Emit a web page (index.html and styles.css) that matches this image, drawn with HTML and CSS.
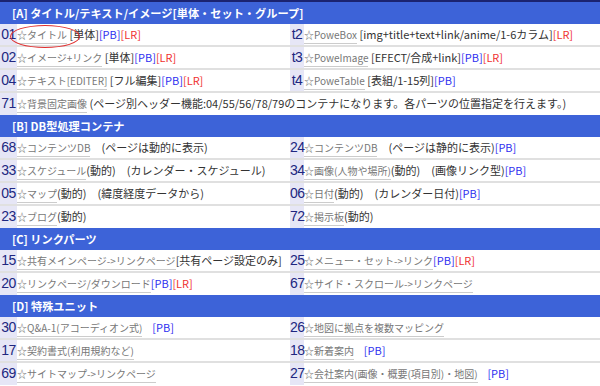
FILE: index.html
```html
<!DOCTYPE html>
<html lang="ja">
<head>
  <meta charset="UTF-8" />
  <title>パーツ一覧</title>
  <link rel="stylesheet" href="styles.css">
</head>
<body>
  <div class="menu">
    <section class="group">
      <h2 class="group-title">[A] タイトル/テキスト/イメージ[単体・セット・グループ]</h2>
      <div class="row">
        <span class="num">01</span><span class="item"><a href="#">☆タイトル</a> [単体]<span class="pb">[PB]</span><span class="lr">[LR]</span></span>
        <span class="num">t2</span><span class="item"> <a href="#">☆PoweBox</a> [img+title+text+link/anime/1-6カラム]<span class="lr">[LR]</span></span>
      </div>
      <div class="row">
        <span class="num">02</span><span class="item"><a href="#">☆イメージ+リンク</a> [単体]<span class="pb">[PB]</span><span class="lr">[LR]</span></span>
        <span class="num">t3</span><span class="item"> <a href="#">☆PoweImage</a> [EFECT/合成+link]<span class="pb">[PB]</span><span class="lr">[LR]</span></span>
      </div>
      <div class="row">
        <span class="num">04</span><span class="item"><a href="#">☆テキスト[EDITER]</a> [フル編集]<span class="pb">[PB]</span><span class="lr">[LR]</span></span>
        <span class="num">t4</span><span class="item"> <a href="#">☆PoweTable</a> [表組/1-15列]<span class="pb">[PB]</span></span>
      </div>
      <div class="row row-wide">
        <span class="num">71</span><span class="item"><a href="#">☆背景固定画像</a> (ページ別ヘッダー機能:04/55/56/78/79のコンテナになります。各パーツの位置指定を行えます。)</span>
      </div>
    </section>

    <section class="group">
      <h2 class="group-title">[B] DB型処理コンテナ</h2>
      <div class="row">
        <span class="num">68</span><span class="item"><a href="#">☆コンテンツDB</a>　(ページは動的に表示)</span>
        <span class="num">24</span><span class="item"><a href="#">☆コンテンツDB</a>　(ページは静的に表示)<span class="pb">[PB]</span></span>
      </div>
      <div class="row">
        <span class="num">33</span><span class="item"><a href="#">☆スケジュール</a>(動的)　(カレンダー・スケジュール)</span>
        <span class="num">34</span><span class="item"><a href="#">☆画像(人物や場所)</a>(動的)　(画像リンク型)<span class="pb">[PB]</span></span>
      </div>
      <div class="row">
        <span class="num">05</span><span class="item"><a href="#">☆マップ</a>(動的)　(緯度経度データから)</span>
        <span class="num">06</span><span class="item"><a href="#">☆日付</a>(動的)　(カレンダー日付)<span class="pb">[PB]</span></span>
      </div>
      <div class="row">
        <span class="num">23</span><span class="item"><a href="#">☆ブログ</a>(動的)</span>
        <span class="num">72</span><span class="item"><a href="#">☆掲示板</a>(動的)</span>
      </div>
    </section>

    <section class="group">
      <h2 class="group-title">[C] リンクパーツ</h2>
      <div class="row">
        <span class="num">15</span><span class="item"><a href="#">☆共有メインページ-&gt;リンクページ</a>[共有ページ設定のみ]</span>
        <span class="num">25</span><span class="item"><a href="#">☆メニュー・セット-&gt;リンク</a><span class="pb">[PB]</span><span class="lr">[LR]</span></span>
      </div>
      <div class="row">
        <span class="num">20</span><span class="item"><a href="#">☆リンクページ/ダウンロード</a><span class="pb">[PB]</span><span class="lr">[LR]</span></span>
        <span class="num">67</span><span class="item"><a href="#">☆サイド・スクロール-&gt;リンクページ</a></span>
      </div>
    </section>

    <section class="group">
      <h2 class="group-title">[D] 特殊ユニット</h2>
      <div class="row">
        <span class="num">30</span><span class="item"><a href="#">☆Q&amp;A-1(アコーディオン式)</a>&nbsp;&nbsp;&nbsp;&nbsp;<span class="pb">[PB]</span></span>
        <span class="num">26</span><span class="item"><a href="#">☆地図に拠点を複数マッピング</a></span>
      </div>
      <div class="row">
        <span class="num">17</span><span class="item"><a href="#">☆契約書式(利用規約など)</a></span>
        <span class="num">18</span><span class="item"><a href="#">☆新着案内</a>&nbsp;&nbsp;&nbsp;&nbsp;<span class="pb">[PB]</span></span>
      </div>
      <div class="row">
        <span class="num">69</span><span class="item"><a href="#">☆サイトマップ-&gt;リンクページ</a></span>
        <span class="num">27</span><span class="item"><a href="#">☆会社案内(画像・概要(項目別)・地図)</a>&nbsp;&nbsp;&nbsp;&nbsp;<span class="pb">[PB]</span></span>
      </div>
    </section>

    <!-- 赤丸の注釈 -->
    <span class="mark"></span>
  </div>
</body>
</html>
```

FILE: styles.css
```css
:root {
  --head: #3d63d8;
  --head-line: #1b2370;
  --num-bg: #e6e6f6;
  --num: #202680;
  --text: #333333;
  --link: #777777;
  --pb: #3030f0;
  --lr: #f03030;
  --line: #e0e0e0;
}

body {
  margin: 0;
  background: #ffffff;
  font-family: "Noto Sans CJK JP", "Noto Sans", sans-serif;
  color: var(--text);
}

.menu {
  position: relative;
  border-top: 2px solid var(--head-line);
}

.group-title {
  margin: 0;
  height: 22px;
  line-height: 22px;
  padding-left: 12px;
  background: var(--head);
  color: #ffffff;
  font-size: 11.2px;
  font-weight: 700;
}

.row {
  display: grid;
  grid-template-columns: 17px 273px 14px 1fr;
  height: 21px;
  border-bottom: 2px solid var(--line);
  font-size: 11px;
  line-height: 21px;
  white-space: nowrap;
}

.row-wide {
  grid-template-columns: 17px 1fr;
}

.group .row:last-child {
  border-bottom: none;
  height: 22px;
}

.num {
  background: var(--num-bg);
  color: var(--num);
  font-family: "Liberation Sans", Arial, sans-serif;
  font-size: 14px;
  text-align: center;
  letter-spacing: -0.5px;
}

.item {
  overflow: hidden;
}

.item a {
  color: var(--link);
  font-size: 10px;
  text-decoration: none;
  border-bottom: 1px solid #cccccc;
  padding-bottom: 1px;
}

.pb {
  color: var(--pb);
}

.lr {
  color: var(--lr);
}

.mark {
  position: absolute;
  left: 10px;
  top: 23px;
  width: 68px;
  height: 21px;
  border: 1.5px solid #e03030;
  border-radius: 50%;
}
```
